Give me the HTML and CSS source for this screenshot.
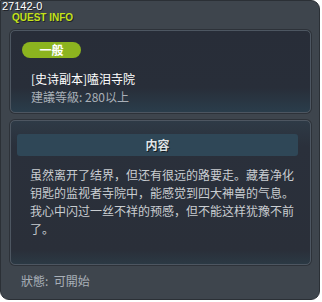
FILE: index.html
```html
<!DOCTYPE html>
<html lang="zh">
<head>
    <meta charset="UTF-8">
    <title>Quest Info</title>
    <link rel="stylesheet" href="styles.css">
</head>
<body>
    <div class="window">
        <div class="quest-id">27142-0</div>
        <div class="window-title">QUEST INFO</div>

        <div class="panel summary">
            <span class="badge">一般</span>
            <div class="quest-name">[史诗副本]嗑泪寺院</div>
            <div class="quest-level">建議等級: 280以上</div>
        </div>

        <div class="panel detail">
            <div class="section-head">内容</div>
            <p class="quest-text">虽然离开了结界，但还有很远的路要走。藏着净化钥匙的监视者寺院中，能感觉到四大神兽的气息。我心中闪过一丝不祥的预感，但不能这样犹豫不前了。</p>
        </div>

        <div class="status">狀態:&nbsp; 可開始</div>
    </div>
</body>
</html>
```

FILE: styles.css
```css
body {
    margin: 0;
    padding: 0;
    background-color: #fff;
    font-family: "Noto Sans CJK SC", "Noto Sans CJK TC", sans-serif;
    font-size: 12px;
}
.window {
    position: relative;
    width: 320px;
    height: 300px;
    box-sizing: border-box;
    background-color: #3e454d;
    border: 1px solid #2b3036;
    border-radius: 0 9px 9px 9px;
    padding: 29px 8px 0 9px;
}
.quest-id {
    position: absolute;
    top: 0;
    left: 1px;
    line-height: 11px;
    font-family: "Liberation Sans", sans-serif;
    font-size: 11px;
    color: #fff;
    text-shadow: 1px 1px 0 #1c2026;
}
.window-title {
    position: absolute;
    top: 12px;
    left: 11px;
    line-height: 9px;
    font-family: "Liberation Sans", sans-serif;
    font-weight: bold;
    font-size: 10px;
    color: #c4e21a;
    text-shadow: 1px 1px 0 #1f2328;
}
.panel {
    border: 1px solid #4d5661;
    border-radius: 5px;
    box-shadow: 0 0 0 1px #2d3239;
    box-sizing: border-box;
}
.summary {
    height: 83px;
    padding: 11px 11px 0 11px;
    background: linear-gradient(to bottom, #282d38 0%, #282e39 70%, #2a3d4b 100%);
}
.badge {
    display: inline-block;
    width: 59px;
    height: 16px;
    line-height: 16px;
    border-radius: 8px;
    background-color: #8cb41f;
    color: #fff;
    font-weight: bold;
    text-align: center;
    vertical-align: top;
}
.quest-name {
    margin-top: 11px;
    padding-left: 9px;
    line-height: 18px;
    color: #fff;
}
.quest-level {
    padding-left: 9px;
    line-height: 18px;
    color: #a9b0b8;
}
.detail {
    margin-top: 7px;
    height: 145px;
    padding: 13px 12px 0 6px;
    background: linear-gradient(to bottom, #2e3a46 0%, #2a303b 18%, #2a2f39 90%, #2b3944 100%);
}
.section-head {
    height: 22px;
    line-height: 22px;
    border-radius: 3px;
    background-color: #2f4757;
    color: #dfe3e6;
    font-weight: bold;
    text-align: center;
    text-shadow: 1px 1px 0 #141a20;
}
.quest-text {
    margin: 10px 0 0 0;
    padding: 0 2px 0 13px;
    line-height: 18px;
    color: #c9cdd1;
}
.status {
    padding: 7px 0 0 11px;
    line-height: 18px;
    color: #a9b0b8;
}
```
